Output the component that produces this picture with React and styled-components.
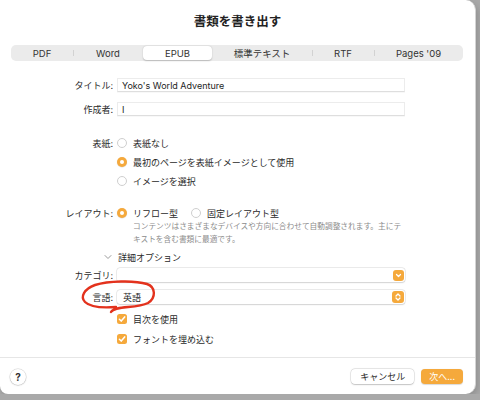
import React from 'react'
import { styled, createGlobalStyle } from 'styled-components'

const ORANGE = '#f5a93c'

const GlobalStyle = createGlobalStyle`
  html, body {
    margin: 0;
    padding: 0;
    background: #a9a9a9;
    font-family: "Inter", "Noto Sans CJK JP", sans-serif;
    color: #262626;
  }
  * { box-sizing: border-box; }
`

const tabs = [
  { name: 'PDF', w: 62 },
  { name: 'Word', w: 70 },
  { name: 'EPUB', w: 69, active: true },
  { name: '標準テキスト', w: 100 },
  { name: 'RTF', w: 62 },
  { name: "Pages '09", w: 89 },
]

const Check = () => (
  <svg width="10" height="10" viewBox="0 0 10 10">
    <path d="M2.4 5.2 L4.2 7.1 L7.7 2.9" fill="none" stroke="#fff" strokeWidth="1.5" strokeLinecap="round" strokeLinejoin="round" />
  </svg>
)

const App = () => {
  return (
    <>
      <GlobalStyle />
      <Window>
        <Title>書類を書き出す</Title>
        <Segmented>
          {tabs.map((t, idx) => (
            <Segment key={t.name} $w={t.w} $active={t.active} $sep={idx === 1 || idx === 4 || idx === 5}>
              {t.name}
            </Segment>
          ))}
        </Segmented>

        <Form>
          <Row $mt={17} $h={14}>
            <Label>タイトル:</Label>
            <TextField>Yoko's World Adventure</TextField>
          </Row>
          <Row $mt={10} $h={14}>
            <Label>作成者:</Label>
            <TextField>I</TextField>
          </Row>

          <Row $mt={21} $h={12}>
            <Label>表紙:</Label>
            <Option>
              <Radio />
              表紙なし
            </Option>
          </Row>
          <Row $mt={7} $h={12}>
            <Label />
            <Option>
              <Radio $on />
              最初のページを表紙イメージとして使用
            </Option>
          </Row>
          <Row $mt={7} $h={12}>
            <Label />
            <Option>
              <Radio />
              イメージを選択
            </Option>
          </Row>

          <Row $mt={20} $h={12}>
            <Label>レイアウト:</Label>
            <Option>
              <Radio $on />
              リフロー型
            </Option>
            <Option $ml={13}>
              <Radio />
              固定レイアウト型
            </Option>
          </Row>
          <Row $mt={1} $h={26}>
            <Label />
            <Description>
              コンテンツはさまざまなデバイスや方向に合わせて自動調整されます。主にテ
              <br />
              キストを含む書類に最適です。
            </Description>
          </Row>

          <Row $mt={5} $h={12}>
            <Disclosure>
              <svg width="8" height="6" viewBox="0 0 8 6">
                <path d="M1 1.5 L4 4.5 L7 1.5" fill="none" stroke="#9a9a9a" strokeWidth="1" strokeLinecap="round" />
              </svg>
              詳細オプション
            </Disclosure>
          </Row>

          <Row $mt={5} $h={14}>
            <Label>カテゴリ:</Label>
            <Popup>
              <span />
              <PopupArrow>
                <svg width="11" height="11" viewBox="0 0 11 11">
                  <path d="M3.5 4.5 L5.5 6.5 L7.5 4.5" fill="none" stroke="#fff" strokeWidth="1.3" strokeLinecap="round" strokeLinejoin="round" />
                </svg>
              </PopupArrow>
            </Popup>
          </Row>
          <Row $mt={8} $h={14}>
            <Label>言語:</Label>
            <Popup>
              <span>英語</span>
              <PopupArrow $big>
                <svg width="12" height="12" viewBox="0 0 12 12">
                  <path d="M4 5 L6 3 L8 5 M4 7 L6 9 L8 7" fill="none" stroke="#fff" strokeWidth="1.3" strokeLinecap="round" strokeLinejoin="round" />
                </svg>
              </PopupArrow>
            </Popup>
          </Row>

          <Row $mt={9} $h={12}>
            <Label />
            <Option>
              <CheckBox>
                <Check />
              </CheckBox>
              目次を使用
            </Option>
          </Row>
          <Row $mt={8} $h={12}>
            <Label />
            <Option>
              <CheckBox>
                <Check />
              </CheckBox>
              フォントを埋め込む
            </Option>
          </Row>
        </Form>

        <Footer>
          <HelpButton>?</HelpButton>
          <Spacer />
          <Button>キャンセル</Button>
          <Button $primary>次へ...</Button>
        </Footer>

        <Annotation width="84" height="40" viewBox="76 276 84 40">
          <path
            d="M111 312 C115 305 136 309 148 303 C156 298 156 287 147 284 C134 280 108 281 95 285 C84 289 80 297 85 302 C90 307 103 308 116 307"
            fill="none"
            stroke="#e3321d"
            strokeWidth="2.4"
            strokeLinecap="round"
            strokeLinejoin="round"
          />
        </Annotation>
      </Window>
    </>
  )
}

const Window = styled.div`
  position: relative;
  width: 476px;
  height: 394px;
  background: #fff;
  border-radius: 0 10px 10px 8px;
  border-right: 1px solid #d4d4d4;
  box-shadow: 2px 3px 6px rgba(0, 0, 0, 0.15);
  display: flex;
  flex-direction: column;
  overflow: hidden;
`

const Title = styled.div`
  padding-top: 14px;
  height: 30px;
  line-height: 16px;
  text-align: center;
  font-size: 12.5px;
  font-weight: 600;
  color: #222;
`

const Segmented = styled.div`
  margin: 15px 0 0 11px;
  width: 452px;
  height: 16px;
  border-radius: 5px;
  background: #ebebeb;
  display: flex;
  align-items: stretch;
`

const Segment = styled.div`
  position: relative;
  width: ${(p) => p.$w}px;
  display: flex;
  align-items: center;
  justify-content: center;
  font-size: 9.5px;
  color: #333;
  border-radius: 4px;
  margin: 1px 0;
  background: ${(p) => (p.$active ? '#fff' : 'transparent')};
  box-shadow: ${(p) => (p.$active ? '0 0.5px 1.5px rgba(0,0,0,0.22)' : 'none')};
  &::before {
    content: '';
    display: ${(p) => (p.$sep ? 'block' : 'none')};
    position: absolute;
    left: 0;
    top: 4px;
    bottom: 4px;
    width: 1px;
    background: #d2d2d2;
  }
`

const Form = styled.div`
  flex: 1;
  display: flex;
  flex-direction: column;
`

const Row = styled.div`
  margin-top: ${(p) => p.$mt}px;
  height: ${(p) => p.$h}px;
  display: flex;
  align-items: center;
`

const Label = styled.div`
  width: 113px;
  margin-right: 4px;
  text-align: right;
  font-size: 9px;
  color: #2a2a2a;
  white-space: nowrap;
`

const TextField = styled.div`
  width: 288px;
  height: 14px;
  display: flex;
  align-items: center;
  padding-left: 4px;
  font-size: 9px;
  color: #1e1e1e;
  background: #fff;
  border: 1px solid #ececec;
  border-bottom-color: #dedede;
  box-shadow: 0 0.5px 0 rgba(0, 0, 0, 0.06);
`

const Option = styled.div`
  display: flex;
  align-items: center;
  gap: 6px;
  margin-left: ${(p) => p.$ml || 0}px;
  font-size: 9px;
  color: #2a2a2a;
  white-space: nowrap;
`

const Radio = styled.span`
  width: 10px;
  height: 10px;
  border-radius: 50%;
  flex: none;
  background: ${(p) => (p.$on ? ORANGE : '#fff')};
  border: ${(p) => (p.$on ? 'none' : '1px solid #cfcfcf')};
  box-shadow: ${(p) => (p.$on ? '0 0.5px 1px rgba(0,0,0,0.15)' : 'none')};
  display: flex;
  align-items: center;
  justify-content: center;
  &::after {
    content: '';
    display: ${(p) => (p.$on ? 'block' : 'none')};
    width: 4px;
    height: 4px;
    border-radius: 50%;
    background: #fff;
  }
`

const Description = styled.div`
  margin-left: 16px;
  font-size: 7.7px;
  line-height: 13px;
  color: #8c8c8c;
  white-space: nowrap;
`

const Disclosure = styled.div`
  margin-left: 104px;
  display: flex;
  align-items: center;
  gap: 6px;
  font-size: 9px;
  color: #2a2a2a;
`

const Popup = styled.div`
  width: 288px;
  height: 14px;
  display: flex;
  align-items: center;
  justify-content: space-between;
  padding: 0 1px 0 6px;
  border-radius: 3px;
  background: #fff;
  box-shadow: 0 0 0 0.5px rgba(0, 0, 0, 0.12), 0 0.5px 1.5px rgba(0, 0, 0, 0.12);
  font-size: 9px;
  color: #1e1e1e;
`

const PopupArrow = styled.span`
  width: ${(p) => (p.$big ? 12 : 11)}px;
  height: ${(p) => (p.$big ? 12 : 11)}px;
  border-radius: 3px;
  background: ${ORANGE};
  display: flex;
  align-items: center;
  justify-content: center;
`

const CheckBox = styled.span`
  width: 10px;
  height: 10px;
  border-radius: 2.5px;
  background: ${ORANGE};
  display: flex;
  align-items: center;
  justify-content: center;
  flex: none;
`

const Footer = styled.div`
  height: 37px;
  border-top: 1px solid #e6e6e6;
  display: flex;
  align-items: center;
  padding: 1px 12px 0 10px;
  gap: 7px;
`

const Spacer = styled.div`
  flex: 1;
`

const HelpButton = styled.div`
  width: 16px;
  height: 16px;
  border-radius: 50%;
  background: #fff;
  box-shadow: 0 0 0 0.5px rgba(0, 0, 0, 0.15), 0 0.5px 1.5px rgba(0, 0, 0, 0.2);
  display: flex;
  align-items: center;
  justify-content: center;
  font-size: 10px;
  font-weight: 700;
  color: #333;
`

const Button = styled.div`
  height: 15px;
  padding: 0 ${(p) => (p.$primary ? 8 : 9)}px;
  border-radius: 4px;
  display: flex;
  align-items: center;
  font-size: 9px;
  background: ${(p) => (p.$primary ? ORANGE : '#fff')};
  color: ${(p) => (p.$primary ? '#fff' : '#2a2a2a')};
  box-shadow: ${(p) =>
    p.$primary
      ? '0 0.5px 1px rgba(0,0,0,0.15)'
      : '0 0 0 0.5px rgba(0,0,0,0.14), 0 0.5px 1.5px rgba(0,0,0,0.18)'};
`

const Annotation = styled.svg`
  position: absolute;
  left: 76px;
  top: 276px;
  pointer-events: none;
`

export default App
